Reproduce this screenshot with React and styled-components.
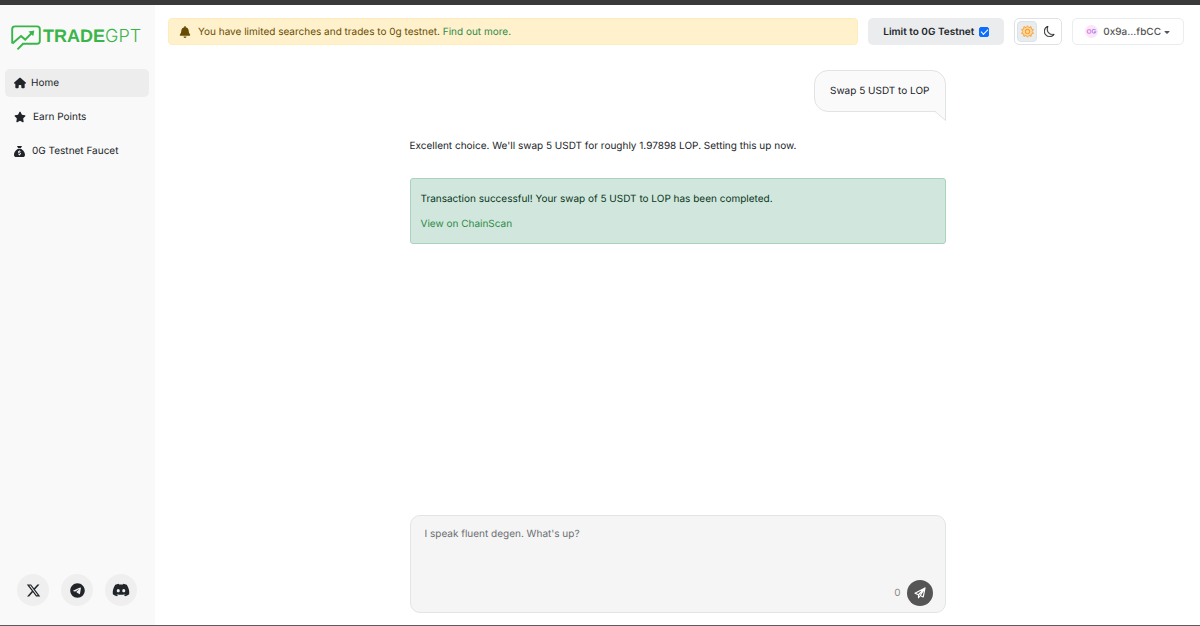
import React, { useState } from "react";
import styled, { createGlobalStyle } from "styled-components";
import {
  FaHouse,
  FaStar,
  FaSackDollar,
  FaBell,
  FaXTwitter,
  FaTelegram,
  FaDiscord,
  FaCaretDown,
} from "react-icons/fa6";
import { BsMoon } from "react-icons/bs";

const GlobalStyle = createGlobalStyle`
  * {
    box-sizing: border-box;
  }
  body {
    margin: 0;
    background-color: white;
    color: #212529;
    font-family: "Inter", "Liberation Sans", sans-serif;
    font-size: 10px;
    line-height: 16px;
    text-rendering: geometricPrecision;
  }
  button,
  input,
  textarea {
    font: inherit;
    color: inherit;
    text-rendering: inherit;
  }
  p {
    margin: 0;
  }
`;

function Logo() {
  return (
    <LogoLink href="#" aria-label="TradeGPT">
      <svg width="30" height="26" viewBox="0 0 30 26" fill="none">
        <path
          d="M1.2 18.5V4Q1.2 1.4 4 1.4H26Q28.8 1.4 28.8 4V16Q28.8 18.8 26 18.8H12L6.5 24.4"
          stroke="#39b54a"
          strokeWidth="1.9"
        />
        <path
          d="M1.4 18.4L10 11L14.2 14.6L21 7.8"
          stroke="#39b54a"
          strokeWidth="2"
        />
        <path d="M17.5 6.5L23.3 5.6L22.3 11.3Z" fill="#39b54a" />
      </svg>
      <LogoText>
        <b>TRADE</b>
        <LogoThin>GPT</LogoThin>
      </LogoText>
    </LogoLink>
  );
}

function SunIcon() {
  return (
    <svg width="13" height="13" viewBox="0 0 24 24" fill="none">
      <path
        d="M12 1.5L14.6 5L18.6 3L19 7.4L23 8.5L20.6 12L23 15.5L19 16.6L18.6 21L14.6 19L12 22.5L9.4 19L5.4 21L5 16.6L1 15.5L3.4 12L1 8.5L5 7.4L5.4 3L9.4 5Z"
        fill="#ffd9a0"
        stroke="#f7a035"
        strokeWidth="1.8"
      />
      <circle cx="12" cy="12" r="4" stroke="#f7a035" strokeWidth="2" />
    </svg>
  );
}

function WalletIcon() {
  return (
    <svg width="13" height="13" viewBox="0 0 14 14" fill="none">
      <circle cx="7" cy="7" r="7" fill="#f9e6f8" />
      <circle cx="4.4" cy="7" r="2" stroke="#e486e6" strokeWidth="1.2" />
      <path d="M11.4 5.7A2 2 0 1 0 11.6 7.4H9.8" stroke="#b58cf0" strokeWidth="1.2" />
    </svg>
  );
}

function SendIcon() {
  return (
    <svg width="12" height="12" viewBox="0 0 24 24" fill="none">
      <path
        d="M22 2L18.5 20L12.5 17L9 21.5V15.5L2 12.5Z M9 15.5L22 2L12.5 17"
        stroke="white"
        strokeWidth="2.4"
        strokeLinejoin="round"
      />
    </svg>
  );
}

export default function App() {
  const [limited, setLimited] = useState(true);
  const [dark, setDark] = useState(false);
  const [text, setText] = useState("");

  return (
    <Page>
      <GlobalStyle />
      <Sidebar>
        <Logo />
        <Nav>
          <NavLink href="#" $active $gap={5}>
            <FaHouse size={12} />
            Home
          </NavLink>
          <NavLink href="#">
            <FaStar size={12} />
            Earn Points
          </NavLink>
          <NavLink href="#">
            <FaSackDollar size={11} />
            0G Testnet Faucet
          </NavLink>
        </Nav>
        <Socials>
          <SocialLink href="#" aria-label="X">
            <FaXTwitter size={15} />
          </SocialLink>
          <SocialLink href="#" aria-label="Telegram">
            <FaTelegram size={15} />
          </SocialLink>
          <SocialLink href="#" aria-label="Discord">
            <FaDiscord size={18} />
          </SocialLink>
        </Socials>
      </Sidebar>
      <Main>
        <Header>
          <Banner>
            <FaBell size={12} />
            <span>
              You have limited searches and trades to 0g testnet.{" "}
              <GreenLink href="#">Find out more.</GreenLink>
            </span>
          </Banner>
          <LimitLabel>
            Limit to 0G Testnet
            <Checkbox
              type="checkbox"
              checked={limited}
              onChange={(e) => setLimited(e.target.checked)}
            />
          </LimitLabel>
          <ThemeSwitch>
            <ThemeButton
              aria-label="Light theme"
              $active={!dark}
              onClick={() => setDark(false)}
            >
              <SunIcon />
            </ThemeButton>
            <ThemeButton
              aria-label="Dark theme"
              $active={dark}
              onClick={() => setDark(true)}
            >
              <BsMoon size={11} strokeWidth={0.4} />
            </ThemeButton>
          </ThemeSwitch>
          <WalletButton>
            <WalletIcon />
            <WalletAddress>
              0x9a...fbCC
              <FaCaretDown size={8} />
            </WalletAddress>
          </WalletButton>
        </Header>
        <Chat>
          <UserMessage>
            Swap 5 USDT to LOP
            <Tail width="12" height="11" viewBox="0 0 12 11">
              <path d="M0 0H12V11Z" fill="#fafafa" />
              <path d="M0.5 1L11.5 10.5V0" fill="none" stroke="#e2e3e4" />
            </Tail>
          </UserMessage>
          <BotMessage>
            Excellent choice. We'll swap 5 USDT for roughly 1.97898 LOP. Setting
            this up now.
          </BotMessage>
          <SuccessBox>
            <p>
              Transaction successful! Your swap of 5 USDT to LOP has been
              completed.
            </p>
            <GreenLink href="#">View on ChainScan</GreenLink>
          </SuccessBox>
          <Composer>
            <Prompt
              aria-label="Message"
              placeholder="I speak fluent degen. What's up?"
              value={text}
              onChange={(e) => setText(e.target.value)}
            />
            <ComposerFooter>
              <Counter>{text.length}</Counter>
              <SendButton aria-label="Send">
                <SendIcon />
              </SendButton>
            </ComposerFooter>
          </Composer>
        </Chat>
      </Main>
    </Page>
  );
}

const Page = styled.div`
  display: flex;
  min-height: 100vh;
  border-top: 5px solid #3a3a3a;
  border-bottom: 1px solid #5c5c5c;
`;
const Sidebar = styled.aside`
  display: flex;
  flex-direction: column;
  flex: 0 0 155px;
  padding: 20px 6px 19px 5px;
  background-color: #f9f9f9;
`;
const LogoLink = styled.a`
  display: flex;
  align-items: flex-start;
  gap: 2px;
  padding-left: 6px;
  color: #39b54a;
  text-decoration: none;
`;
const LogoText = styled.span`
  font-family: "Liberation Sans", sans-serif;
  font-size: 18px;
  line-height: 23px;
`;
const LogoThin = styled.span`
  font-family: "Inter", sans-serif;
  font-weight: 300;
`;
const Nav = styled.nav`
  display: flex;
  flex-direction: column;
  gap: 6px;
  margin-top: 18px;
`;
const NavLink = styled.a`
  display: flex;
  align-items: center;
  gap: ${({ $gap }) => $gap || 7}px;
  height: 28px;
  padding: 0 9px;
  border-radius: 5px;
  background-color: ${({ $active }) => ($active ? "#ededed" : "transparent")};
  color: #212529;
  text-decoration: none;
`;
const Socials = styled.div`
  display: flex;
  gap: 12px;
  margin-top: auto;
  padding-left: 12px;
`;
const SocialLink = styled.a`
  display: flex;
  align-items: center;
  justify-content: center;
  width: 32px;
  height: 32px;
  border-radius: 50%;
  background-color: #efefef;
  color: #212529;
`;
const Main = styled.main`
  display: flex;
  flex-direction: column;
  flex: 1;
  min-width: 0;
`;
const Header = styled.header`
  display: flex;
  align-items: center;
  gap: 10px;
  padding: 13px 16px 0 13px;
`;
const Banner = styled.div`
  display: flex;
  align-items: center;
  flex: 1;
  gap: 7px;
  height: 27px;
  padding: 0 10px;
  border: 1px solid #ffecb8;
  border-radius: 4px;
  background-color: #fff1cc;
  color: #664d03;
`;
const GreenLink = styled.a`
  color: #2f8a48;
  text-decoration: none;
`;
const LimitLabel = styled.label`
  display: flex;
  align-items: center;
  gap: 5px;
  height: 27px;
  padding: 0 15px;
  border-radius: 5px;
  background-color: #ebecee;
  font-weight: 600;
`;
const Checkbox = styled.input`
  display: grid;
  place-items: center;
  appearance: none;
  width: 10px;
  height: 10px;
  margin: 0;
  border: 1px solid #0d6efd;
  border-radius: 2px;
  background-color: white;
  &:checked {
    background-color: #0d6efd;
  }
  &:checked::after {
    content: "";
    width: 6px;
    height: 3px;
    margin-bottom: 2px;
    border: solid white;
    border-width: 0 0 1px 1px;
    transform: rotate(-45deg);
  }
`;
const ThemeSwitch = styled.div`
  display: flex;
  gap: 2px;
  padding: 2px;
  border: 1px solid #dee2e6;
  border-radius: 5px;
`;
const ThemeButton = styled.button`
  display: flex;
  align-items: center;
  justify-content: center;
  width: 20px;
  height: 21px;
  padding: 0;
  border: 1px solid ${({ $active }) => ($active ? "#dee2e6" : "transparent")};
  border-radius: 4px;
  background-color: ${({ $active }) => ($active ? "#e9ecef" : "transparent")};
`;
const WalletButton = styled.button`
  display: flex;
  align-items: center;
  gap: 5px;
  height: 27px;
  padding: 0 12px;
  border: 1px solid #eaecee;
  border-radius: 5px;
  background-color: white;
  color: #555;
  font-weight: 500;
`;
const WalletAddress = styled.span`
  display: flex;
  align-items: center;
  gap: 2px;
`;
const Chat = styled.section`
  display: flex;
  flex-direction: column;
  flex: 1;
  width: 100%;
  max-width: 536px;
  margin: 0 auto;
  padding: 25px 0 12px;
`;
const UserMessage = styled.div`
  position: relative;
  align-self: flex-end;
  padding: 12px 15px;
  border: 1px solid #e2e3e4;
  border-radius: 14px 14px 0 14px;
  background-color: #fafafa;
`;
const Tail = styled.svg`
  position: absolute;
  right: -1px;
  top: calc(100% - 1px);
`;
const BotMessage = styled.p`
  margin: 26px 0 24px;
`;
const SuccessBox = styled.div`
  display: flex;
  flex-direction: column;
  align-items: flex-start;
  gap: 9px;
  padding: 12px 10px 11px;
  border: 1px solid #a9d3c0;
  border-radius: 3px;
  background-color: #d1e7dd;
  color: #0a3622;
`;
const Composer = styled.form`
  display: flex;
  flex-direction: column;
  margin-top: auto;
  padding: 10px 12px 6px 14px;
  border: 1px solid #e3e4e5;
  border-radius: 10px;
  background-color: #f5f5f5;
`;
const Prompt = styled.textarea`
  height: 54px;
  padding: 0;
  border: 0;
  outline: 0;
  resize: none;
  background-color: transparent;
  &::placeholder {
    color: #6c6f72;
    opacity: 1;
  }
`;
const ComposerFooter = styled.div`
  display: flex;
  align-items: center;
  justify-content: flex-end;
  gap: 6px;
`;
const Counter = styled.span`
  color: #8a8a8a;
`;
const SendButton = styled.button`
  display: flex;
  align-items: center;
  justify-content: center;
  width: 26px;
  height: 26px;
  padding: 0;
  border: 0;
  border-radius: 50%;
  background-color: #555;
`;
